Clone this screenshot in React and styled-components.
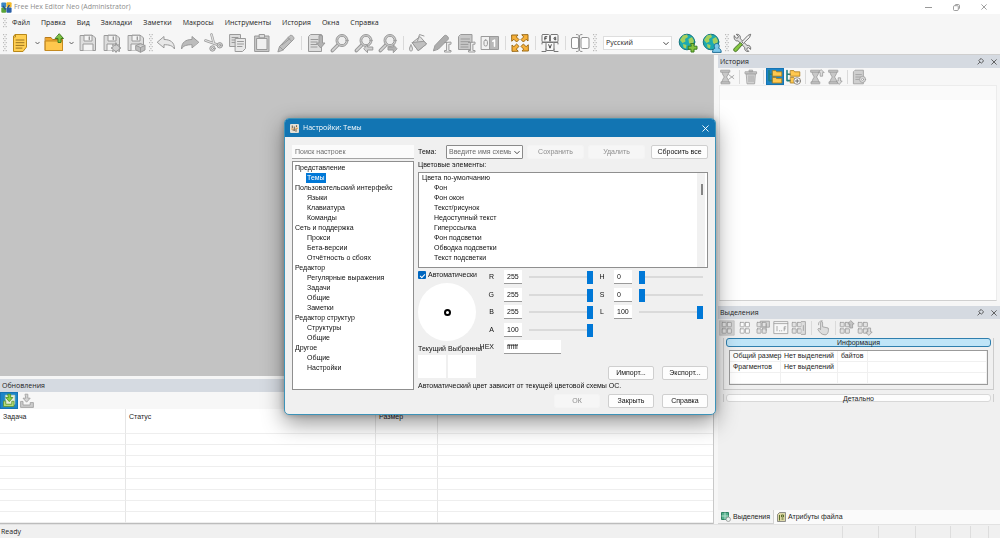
import React, { useState } from "react";
import styled, { createGlobalStyle, css } from "styled-components";

const UI = `"Open Sans", "Noto Sans", sans-serif`;
const DLG = `"Liberation Sans", Arial, sans-serif`;

const Global = createGlobalStyle`
  *, *::before, *::after { box-sizing: border-box; }
  html, body, #root { height: 100%; }
  body { margin: 0; font: 7px/10px ${UI}; color: #1c1c1c; background: #f0f0f0; }
  button, input, select { font: inherit; color: inherit; margin: 0; padding: 0; }
  button { border: 0; background: none; }
  ul { list-style: none; margin: 0; padding: 0; }
  svg { display: block; flex: none; }
`;

/* ---------- shell ---------- */
const Shell = styled.div`
  min-height: 100vh;
  display: flex;
  flex-direction: column;
  background: #f6f6f6;
`;
const TitleBar = styled.header`
  display: flex;
  align-items: center;
  gap: 2px;
  height: 14px;
  padding: 0 2px 0 1px;
  background: #fff;
  color: #8c8c8c;
`;
const TitleText = styled.h1`
  flex: 1;
  margin: 0;
  font-size: 7px;
  font-weight: 400;
`;
const WindowButtons = styled.div`
  display: flex;
`;
const WindowButton = styled.button`
  display: grid;
  place-items: center;
  width: 28px;
  height: 14px;
`;
const MenuBar = styled.nav`
  display: flex;
  align-items: center;
  height: 18px;
`;
const MenuList = styled.ul`
  display: flex;
  gap: 11px;
  padding-left: 2px;
`;
const MenuItem = styled.button`
  display: block;
`;
const ToolBar = styled.div`
  display: flex;
  align-items: center;
  height: 22px;
`;
const ToolGroup = styled.div`
  display: flex;
  gap: 4px;
`;
const ToolButton = styled.button`
  display: grid;
  place-items: center;
  width: ${(p) => (p.$narrow ? 14 : 20)}px;
  height: 20px;
`;
const Sep = styled.span`
  width: ${(p) => (p.$small ? 6 : 10)}px;
  height: 14px;
  display: flex;
  justify-content: center;
  &::after { content: ""; width: 1px; background: #dadada; }
`;
const GripBox = styled.span`
  display: grid;
  place-items: center;
  width: 10px;
`;
const LangSelect = styled.div`
  position: relative;
  margin: 0 6px 0 3px;
  select {
    appearance: none;
    display: block;
    width: 69px;
    height: 14px;
    padding: 0 2px;
    border: 1px solid #dedede;
    background: #fff;
  }
  svg { position: absolute; right: 3px; top: 5px; }
`;
const Main = styled.main`
  flex: 1;
  display: flex;
  gap: 4px;
  border-top: 1px solid #cfcfcf;
`;
const LeftColumn = styled.div`
  flex: 1;
  min-width: 0;
  display: flex;
  flex-direction: column;
  gap: 3px;
  border-right: 1px solid #c8c8c8;
`;
const Workspace = styled.section`
  flex: 1;
  background: #c3c3c3;
`;
const RightColumn = styled.div`
  width: 282px;
  display: flex;
  flex-direction: column;
`;
const Panel = styled.section`
  display: flex;
  flex-direction: column;
  flex: ${(p) => p.$flex || "none"};
  background: ${(p) => p.$bg || "#f7f7f7"};
`;
const PanelHead = styled.header`
  display: flex;
  align-items: center;
  gap: 7px;
  height: 13px;
  padding: 0 3px 0 2px;
  background: #d5dae1;
  h2 { flex: 1; margin: 0; font-size: 7px; font-weight: 400; }
`;
const PanelTools = styled.div`
  display: flex;
  align-items: center;
  height: 17px;
`;
const SmallTool = styled.button`
  display: grid;
  place-items: center;
  width: 18px;
  height: 17px;
  ${(p) => p.$on && css`background: #1d85c8; border: 1px solid #1474b4;`}
`;
const HistoryList = styled.div`
  flex: 1;
  margin: 0 3px 1px 1px;
  border: 1px solid #ececec;
  border-bottom-color: #d0d0d0;
  background: linear-gradient(#fafafa 14px, #fff 14px);
`;
const UpdatesTable = styled.table`
  width: 100%;
  height: 115px;
  border-collapse: separate;
  border-spacing: 0;
  table-layout: fixed;
  background: #fff;
  font: 7px/10px ${DLG};
  border-bottom: 1px solid #bcbcbc;
  th, td { padding: 0 3px; text-align: left; font-weight: 400; border-right: 1px solid #e6e6e6; border-bottom: 1px solid #eeeeee; }
  th { height: 25px; padding-top: 3px; vertical-align: top; }
  th:last-child, td:last-child { border-right: 0; }
`;

/* ---------- selections panel ---------- */
const SelectionBody = styled.div`
  display: flow-root;
  height: 174px;
`;
const PanelSpacer = styled.div`
  height: 4px;
  background: #f6f6f6;
`;
const InfoGroup = styled.div`
  margin: 2px 6px 0 5px;
  padding-bottom: 4px;
  border: 1px solid #cccccc;
  border-top: 0;
`;
const GroupButton = styled.button`
  display: block;
  width: calc(100% - 4px);
  height: ${(p) => (p.$open ? 9 : 8)}px;
  margin: 0 2px ${(p) => (p.$open ? 3 : 0)}px;
  font: 7px/7px ${DLG};
  text-align: center;
  border: 1px solid ${(p) => (p.$open ? "#2f7fae" : "#d8d8d8")};
  border-radius: 3px;
  background: ${(p) => (p.$open ? "#bfe5f8" : "#fdfdfd")};
`;
const DetailRow = styled.div`
  margin: 4px 6px 0 5px;
  border: solid #cfcfcf;
  border-width: 0 1px;
`;
const InfoTable = styled.table`
  width: calc(100% - 10px);
  margin: 0 5px;
  border: 1px solid #9b9b9b;
  border-collapse: separate;
  border-spacing: 0;
  table-layout: fixed;
  background: #fff;
  font: 7px/10px ${DLG};
  th, td {
    height: 11px;
    padding: 0 0 0 3px;
    font-weight: 400;
    text-align: left;
    white-space: nowrap;
    border-right: 1px solid #f0f0f0;
    border-bottom: 1px solid #f0f0f0;
  }
`;
const Tabs = styled.div`
  display: flex;
  height: 14px;
  background: #fafafa;
  font: 7px/10px ${DLG};
`;
const Tab = styled.button`
  display: flex;
  align-items: center;
  gap: 2px;
  padding: 0 3px;
  border: solid ${(p) => (p.$on ? "#d2d2d2" : "transparent")};
  border-width: 0 1px 1px 0;
  background: ${(p) => (p.$on ? "#f4f4f4" : "transparent")};
`;
const StatusBar = styled.footer`
  display: flex;
  align-items: center;
  height: 14px;
  padding-left: 1px;
  background: #f0f0f0;
  border-top: 1px solid #e2e2e2;
  p { flex: 1; margin: 0; }
`;
const StatusCell = styled.span`
  width: ${(p) => p.$w}px;
  height: 12px;
  border-left: 1px solid #dddddd;
`;

/* ---------- dialog ---------- */
const Overlay = styled.div`
  position: fixed;
  inset: 0;
  display: flex;
  align-items: center;
  justify-content: center;
  padding-bottom: 5px;
`;
const Dialog = styled.section`
  width: 432px;
  border: 1px solid #3d93b8;
  border-radius: 5px;
  background: #f0f0f0;
  overflow: hidden;
  box-shadow: 0 8px 22px rgba(0, 0, 0, 0.42), 0 0 6px rgba(0, 0, 0, 0.25);
  font: 7px/10px ${DLG};
  color: #111;
`;
const DialogHead = styled.header`
  display: flex;
  align-items: center;
  gap: 4px;
  height: 18px;
  padding: 0 6px 0 5px;
  background: #1275b3;
  color: #fff;
  h2 { flex: 1; margin: 0; font: 7px/10px ${UI}; }
`;
const DialogBody = styled.div`
  display: flex;
  gap: 4px;
  padding: 8px 7px 0;
`;
const NavColumn = styled.div`
  width: 122px;
  display: flex;
  flex-direction: column;
  gap: 2px;
`;
const SearchInput = styled.input`
  width: 100%;
  height: 14px;
  padding: 0 3px;
  border: 0;
  border-bottom: 1px solid #a5a5a5;
  background: #fbfbfb;
  &::placeholder { color: #6e6e6e; opacity: 1; }
`;
const Tree = styled.ul`
  height: 229px;
  padding: 1px;
  border: 1px solid #8f8f8f;
  background: #fff;
  ul { padding-left: 12px; }
`;
const TreeItem = styled.button`
  display: block;
  height: 10px;
  padding: 0 1px;
  white-space: nowrap;
  ${(p) => p.$on && css`background: #0078d7; color: #fff;`}
`;
const OptionsColumn = styled.div`
  flex: 1;
  min-width: 0;
`;
const ThemeRow = styled.div`
  display: flex;
  align-items: center;
  gap: 4px;
  height: 14px;
  label { width: 24px; }
  button:last-child { margin-left: auto; }
`;
const ThemeSelect = styled.div`
  position: relative;
  select {
    appearance: none;
    display: block;
    width: 77px;
    height: 14px;
    padding: 0 11px 0 2px;
    border: 1px solid #8a8a8a;
    border-radius: 1px;
    background: #fbfbfb;
    color: #6a6a6a;
  }
  svg { position: absolute; right: 3px; top: 5px; }
`;
const PushButton = styled.button`
  width: ${(p) => (p.$wide ? 57 : 46)}px;
  height: 14px;
  border: 1px solid ${(p) => (p.disabled ? "#f4f4f4" : "#cfcfcf")};
  border-radius: 2px;
  background: ${(p) => (p.disabled ? "#f6f6f6" : "#fdfdfd")};
  color: ${(p) => (p.disabled ? "#8e8e8e" : "#111")};
`;
const ElementsTitle = styled.h3`
  margin: 1px 0 2px;
  font: inherit;
`;
const ElementsList = styled.div`
  display: flex;
  height: 96px;
  padding: 0 2px;
  border: 1px solid #8f8f8f;
  background: #fff;
  > ul { flex: 1; }
  ul ul { padding-left: 12px; }
`;
const ScrollTrack = styled.div`
  width: 8px;
  padding: 11px 2px 0 4px;
  background: #f1f1f1;
  &::after { content: ""; display: block; height: 11px; background: #858585; }
`;
const ColorArea = styled.div`
  display: flex;
  margin-top: 2px;
  height: 112px;
`;
const WheelColumn = styled.div`
  width: 64px;
  display: flex;
  flex-direction: column;
`;
const CheckLabel = styled.label`
  display: flex;
  align-items: center;
  gap: 2px;
  height: 10px;
  margin-bottom: 3px;
  input {
    appearance: none;
    display: grid;
    place-items: center;
    width: 8px;
    height: 8px;
    border-radius: 1px;
    background: #0067c0;
  }
  input::before {
    content: "";
    width: 5px;
    height: 3px;
    border: solid #fff;
    border-width: 0 0 1px 1px;
    transform: rotate(-45deg);
  }
`;
const Wheel = styled.div`
  display: grid;
  place-items: center;
  width: 58px;
  height: 58px;
  border-radius: 50%;
  background: #fff;
  &::after {
    content: "";
    width: 7px;
    height: 7px;
    border: 2px solid #000;
    border-radius: 50%;
  }
`;
const Captions = styled.div`
  display: flex;
  gap: 2px;
  margin: 3px 0 1px;
  overflow: hidden;
  white-space: nowrap;
`;
const Swatches = styled.div`
  display: flex;
  gap: 2px;
  span { width: 28px; height: 23px; background: #fff; }
`;
const Channels = styled.div`
  width: ${(p) => p.$w}px;
  height: ${(p) => p.$h}px;
  display: flex;
  flex-direction: column;
  justify-content: space-between;
`;
const Channel = styled.div`
  display: flex;
  align-items: center;
  height: 14px;
  label {
    width: ${(p) => p.$label}px;
    padding-right: ${(p) => (p.$center ? 4 : 10)}px;
    text-align: ${(p) => (p.$center ? "center" : "right")};
    display: flex;
    justify-content: ${(p) => (p.$center ? "center" : "flex-end")};
  }
`;
const ValueInput = styled.input`
  width: ${(p) => (p.$long ? 57 : 18)}px;
  height: 14px;
  padding: 0 3px;
  border: 0;
  border-bottom: 1px solid #9a9a9a;
  background: #fff;
`;
const Slider = styled.input`
  appearance: none;
  width: 64px;
  height: 14px;
  margin-left: 7px;
  background: transparent;
  &::-webkit-slider-runnable-track { height: 2px; background: #dadada; }
  &::-webkit-slider-thumb { appearance: none; width: 6px; height: 13px; margin-top: -5px; background: #0078d7; }
`;
const ButtonRow = styled.div`
  display: flex;
  justify-content: flex-end;
  gap: 8px;
`;
const ImportRow = styled(ButtonRow)`
  margin-top: -16px;
`;
const Note = styled.p`
  margin: 1px 0 0;
`;
const DialogFoot = styled.footer`
  padding: 3px 7px 6px;
`;

/* ---------- icons ---------- */
const K = "#9a9a9a";
const F = "#dddddd";
const Svg = ({ s = 20, children }) => (
  <svg width={s} height={s} viewBox="0 0 20 20" fill={F} stroke={K} strokeWidth="1" strokeLinejoin="round" strokeLinecap="round" aria-hidden="true">
    {children}
  </svg>
);
const Chevron = ({ s = 5, c = "#444" }) => (
  <svg width={s} height={s - 1} viewBox="0 0 6 4" fill="none" stroke={c} strokeWidth="1" aria-hidden="true"><path d="M0.5 0.7 3 3.2 5.5 0.7" /></svg>
);
const GripDots = ({ rows }) => (
  <GripBox>
    <svg width="4" height={rows * 4 - 2} viewBox={`0 0 4 ${rows * 4 - 2}`} fill="#b9b9b9" aria-hidden="true">
      {Array.from({ length: rows }, (_, i) => (
        <g key={i}><rect x="0" y={i * 4} width="1.2" height="1.2" /><rect x="2.6" y={i * 4} width="1.2" height="1.2" /><rect x="1.3" y={i * 4 + 2} width="1.2" height="1.2" /></g>
      ))}
    </svg>
  </GripBox>
);
const Grip = () => <GripDots rows={5} />;
const MenuGrip = () => <GripDots rows={3} />;
const AppLogo = () => (
  <svg width="11" height="11" viewBox="0 0 11 11" aria-hidden="true">
    <rect x="0.3" y="0.5" width="4.9" height="4.9" rx="1" fill="#3a86c4" />
    <rect x="5.4" y="0.2" width="5.2" height="5.3" rx="1" fill="#f2b928" />
    <rect x="0.3" y="5.5" width="4.9" height="5.2" rx="1" fill="#5aa43a" />
    <rect x="5.4" y="5.6" width="5.2" height="5.1" rx="1" fill="#2a5fa8" />
    <path d="M2 4 4.6 7.6M8.4 3 6.6 6" stroke="#24508c" strokeWidth="1.4" />
  </svg>
);
const NewIcon = () => (
  <Svg><path d="M5.5 1.5H16.5V14L13 18.5H3.5V4Z" fill="#ffcf52" stroke="#b98818" /><path d="M5.5 1.5V4H3.5Z" fill="#fff0b8" stroke="#b98818" /><path d="M6 7H14M6 9.7H14M6 12.4H14M6 15.1H12" stroke="#9b7420" /></Svg>
);
const OpenIcon = () => (
  <Svg><path d="M1.5 4.5H7L8.5 6.5H18.5V17.5H1.5Z" fill="#f0a62e" stroke="#b87a18" /><path d="M1.5 8H18.5V17.5H1.5Z" fill="#ffc74d" stroke="#c48a20" /><path d="M15.5 1 19.5 5.5H17V9.5H14V5.5H11.5Z" fill="#7fc241" stroke="#3f7d1d" /></Svg>
);
const Floppy = () => (
  <><path d="M2.5 2.5H15L17.5 5V17.5H2.5Z" /><path d="M6 2.5V8H14V2.5Z" fill="#f4f4f4" /><path d="M11.3 4V6.5" strokeWidth="1.4" /><path d="M5 17.5V11H15V17.5" fill="#f4f4f4" /></>
);
const SaveIcon = () => <Svg><Floppy /></Svg>;
const SaveAsIcon = () => <Svg><Floppy /><path d="M14 10 15 12.5 17.5 11.5 16.8 14 19 15 16.8 16 17.5 18.5 15 17.5 14 19.5 13 17.5 10.5 18.5 11.2 16 9 15 11.2 14 10.5 11.5 13 12.5Z" fill="#d0d0d0" /></Svg>;
const SaveAllIcon = () => <Svg><Floppy /><path d="M10 12.5 14.5 10.5 19 12.5V17L14.5 19.3 10 17Z" fill="#bdbdbd" /><path d="M10 12.5 14.5 14.5 19 12.5M14.5 14.5V19" /></Svg>;
const UndoIcon = () => <Svg><path d="M1.5 9 8 3.5V6.5C14 6.5 18.5 9 18.5 16C16.5 12.5 13 11.7 8 11.7V14.5Z" fill="#e8e8e8" /></Svg>;
const RedoIcon = () => <Svg><path d="M18.5 9 12 3.5V6.5C6 6.5 1.5 9 1.5 16C3.5 12.5 7 11.7 12 11.7V14.5Z" fill="#bcbcbc" /></Svg>;
const CutIcon = () => <Svg><path d="M7.5 1.5 10 11M1.5 7.5 13 11.5" strokeWidth="2.6" /><path d="M7.5 1.5 10 11M1.5 7.5 13 11.5" stroke="#e2e2e2" strokeWidth="1.2" /><circle cx="8.5" cy="15.5" r="2.7" /><circle cx="15.8" cy="12.3" r="2.7" /><circle cx="8.5" cy="15.5" r="1" fill="#f7f7f7" /><circle cx="15.8" cy="12.3" r="1" fill="#f7f7f7" /></Svg>;
const CopyIcon = () => <Svg><path d="M2 1.5H12.5V13.5H2Z" /><path d="M4 4.5H10M4 7H7M4 9.5H7" /><path d="M7.5 5.5H17.5V15.5L14.5 18.5H7.5Z" fill="#e8e8e8" /><path d="M9.5 8.5H15.5M9.5 11H15.5M9.5 13.5H14" /></Svg>;
const PasteIcon = () => <Svg><path d="M3 3H17V18.5H3Z" fill="#c9c9c9" /><path d="M5 5.5H15V16.5H5Z" fill="#f0f0f0" /><path d="M7.5 1.5H12.5V4.8H7.5Z" /></Svg>;
const PencilIcon = () => <Svg><path d="M2 18.5 3.5 13.5 14 2.5C16 1.5 18.8 4.5 17.7 6.3L7 17Z" fill="#c0c0c0" /><path d="M12 4.7 15.6 8.3M3.5 13.5 7 17M6 12 14 5.5" /></Svg>;
const DocArrowIcon = () => <Svg><path d="M5 1.5H15.5V18.5H2.5V4Z" /><path d="M5 6.5H12M5 9H11M5 11.5H11M5 14H11" /><path d="M13 3V10H10.5L14.7 15 19 10H16.5V3Z" fill="#b2b2b2" /></Svg>;
const Lens = () => <><path d="M2.4 17.6 8.3 11.5" strokeWidth="3.6" /><path d="M2.6 17.4 8 12" stroke="#d4d4d4" strokeWidth="1.6" /><circle cx="12" cy="7.5" r="6" fill="#cdcdcd" /><circle cx="12" cy="7.5" r="4.2" fill="#efefef" /></>;
const SearchIcon = () => <Svg><Lens /></Svg>;
const SearchNextIcon = () => <Svg><Lens /><path d="M10 15.5 13.5 11.7V14H18.8V17H13.5V19.3Z" fill="#d0d0d0" /></Svg>;
const SearchPrevIcon = () => <Svg><Lens /><path d="M18.8 15.5 15.3 11.7V14H10V17H15.3V19.3Z" fill="#b2b2b2" /></Svg>;
const FillIcon = () => <Svg><path d="M4.5 9.5 12 3.5 18.5 11 10.5 17.5Z" /><path d="M4.5 9.5 16 8.3 18.5 11 10.5 17.5Z" fill="#c0c0c0" /><path d="M9.5 8 11.5 1.5 16 3" fill="none" /><path d="M3 12C1 15 1 17.5 3 18.3C5 17.5 5 15 3 12Z" /></Svg>;
const IBeam = () => <path d="M12.5 9.5H14.6V17.5H12.5V19H19V17.5H16.9V11.2H19V9.5Z" fill="#f2f2f2" />;
const PencilTextIcon = () => <Svg><path d="M1.5 17.5 3 12.5 12.5 2.5C14.5 1.5 17.3 4.5 16.2 6.3L6.5 16Z" fill="#adadad" /><IBeam /></Svg>;
const DocTextIcon = () => <Svg><path d="M5 1.5H16V16.5H2.5V4Z" fill="#c8c8c8" /><path d="M5 6H13.5M5 8.7H13.5M5 11.4H12M5 14H12" /><IBeam /></Svg>;
const BitsIcon = () => <Svg><path d="M1.5 3.5H10V16.5H1.5Z" fill="#f2f2f2" /><path d="M10 3.5H18.5V16.5H10Z" fill="#b8b8b8" /><rect x="4" y="7" width="3.4" height="6" rx="1.6" fill="none" /><path d="M12.8 8.2 14.5 7V13.2" fill="none" stroke="#fff" strokeWidth="1.5" /></Svg>;
const ExpandIcon = () => (
  <Svg>{[0, 90, 180, 270].map((r) => (
    <path key={r} transform={`rotate(${r} 10 10)`} d="M2 2H8L6.3 3.9 9 6.6 6.6 9 3.9 6.3 2 8Z" fill="#f7b13a" stroke="#9b6a15" />
  ))}</Svg>
);
const KeysIcon = () => (
  <Svg><g fill="#fafafa" stroke="#777"><rect x="2" y="1.5" width="7.5" height="7.5" rx="1" /><rect x="10.5" y="1.5" width="7.5" height="7.5" rx="1" /><rect x="6" y="9.5" width="8" height="8" rx="1" /><path d="M2 11V9.5H6M18 11V9.5H14M2 18.5H6V16M18 18.5H14V16" fill="none" /></g>
    <path d="M4.9 7V3.7H6.9M4.9 5.3H6.4M15.8 4.3C13.5 3 13.2 7.5 15.8 6.8V5.6H15M8.7 11.7 10 15.2 11.3 11.7" fill="none" stroke="#333" strokeWidth="0.9" /></Svg>
);
const SplitIcon = () => <Svg><g fill="#fdfdfd" stroke="#8f8f8f"><rect x="1.5" y="4.5" width="7" height="11" rx="1.5" /><rect x="11" y="4.5" width="8" height="11" rx="1.5" /><path d="M6.5 1.5C8.5 1.5 9 2.2 9 3V17C9 18 8.5 18.5 6.5 18.5M12 1.5C10 1.5 9.5 2.2 9.5 3V17C9.5 18 10 18.5 12 18.5" fill="none" /></g></Svg>;
const Globe = () => <><circle cx="9" cy="9" r="7.8" fill="#1eaab0" stroke="#16767f" /><path d="M5 2.5 9 1.5 10 4 7 6 7.5 8.5 4.5 10 2 7ZM10.5 6 14 4 16 8 14 12 11 10ZM5 11 8.5 12 8 15.5 5.5 14.5Z" fill="#a6d05c" stroke="none" /></>;
const GlobeAddIcon = () => <Svg><Globe /><path d="M13 10.5H16V13.2H19V16.2H16V19H13V16.2H10.2V13.2H13Z" fill="#86c440" stroke="#3b7d1e" /></Svg>;
const GlobeUserIcon = () => <Svg><Globe /><path d="M10.5 19C10.5 16.5 12 15.5 13 15.2C11.5 13 12.3 10.5 14.7 10.5S18 13 16.5 15.2C18 15.6 19.2 16.5 19.2 19Z" fill="#7cc8ea" stroke="#1b6c94" /></Svg>;
const ToolsIcon = () => (
  <Svg>
    <path d="M2.2 3 4.6 5.2 6 4.8 6.4 3.3 4.2 1.4C7 0.8 9 3 8.2 5.6L15 12.4C17.6 11.8 19.2 13.8 18.6 16.4L16.6 14.6 15.2 15 14.8 16.4 16.8 18.4C14 19 12.2 17 12.8 14.5L6 7.8C3.4 8.6 1.5 5.8 2.2 3Z" fill="#e0e0e0" stroke="#666" strokeWidth="0.9" />
    <path d="M18.6 1.6 17.6 4.4 11.4 10.4 9.8 8.8 15.8 2.6Z" fill="#f0f0f0" stroke="#666" strokeWidth="0.9" />
    <path d="M8.6 9.8 10.4 11.6 4.6 18.2C3 19.6 0.6 17.2 2 15.6Z" fill="#84c63e" stroke="#44702a" />
  </Svg>
);
const HourglassShape = () => <><path d="M2.5 1.5H13.5V4H12C12 7 10 8.5 9.5 10C10 11.5 12 13 12 16H13.5V18.5H2.5V16H4C4 13 6 11.5 6.5 10C6 8.5 4 7 4 4H2.5Z" fill="#c8c8c8" /><path d="M4 4H12M4 16H12" /></>;
const HourCut = () => <Svg s={16}><HourglassShape /><path d="M12 7 18.5 12M12 13 18.5 8" /></Svg>;
const HourUp = () => <Svg s={16}><HourglassShape /><path d="M15.5 1 19 4.5H17V9H14V4.5H12Z" fill="#ddd" /></Svg>;
const HourDown = () => <Svg s={16}><HourglassShape /><path d="M15.5 19 19 15H17V11H14V15H12Z" /></Svg>;
const TrashIcon = () => <Svg s={16}><path d="M4.5 6H15.5L14.5 18.5H5.5Z" fill="#d6d6d6" /><path d="M3 3.5H17V6H3ZM8 1.5H12V3.5H8Z" fill="#cfcfcf" /><path d="M7.5 8.5V16M10 8.5V16M12.5 8.5V16" /></Svg>;
const TreeFoldersIcon = ({ add }) => (
  <Svg s={16}><path d="M2.5 2V14.5H7M2.5 6.5H7" fill="none" stroke="#1f7d80" strokeWidth="2" /><path d="M7 2H11L12 3.5H18.5V9H7Z" fill="#ffc850" stroke="#a87818" /><path d="M7 10.5H11L12 12H18.5V17.5H7Z" fill="#ffc850" stroke="#a87818" />{add && <><circle cx="15.2" cy="15" r="4.2" fill="#fff" stroke="#777" /><path d="M13 15H17.4M15.2 12.8V17.2" stroke="#444" /></>}</Svg>
);
const DocGearIcon = () => <Svg s={16}><path d="M5.5 1.5H15.5V18.5H3V4Z" fill="#cfcfcf" /><path d="M6 7H13M6 10H12M6 13H10" /><circle cx="14.5" cy="13" r="3.8" /><circle cx="14.5" cy="13" r="1.3" fill="#fff" /></Svg>;
const Grid = ({ o = 0, pale }) => <>{[[1.5, 3], [8, 3], [1.5, 11], [8, 11]].map(([x, y], i) => <rect key={i} x={x + o} y={y} width="5" height="5.5" rx="0.5" fill={pale ? "#fafafa" : "#e2e2e2"} />)}</>;
const SelA = () => <Svg s={16}><path d="M1 1H19V19H1Z" fill="#d2d2d2" stroke="#c0c0c0" /><Grid o={2.5} /></Svg>;
const SelB = () => <Svg s={16}><Grid o={2.5} pale /></Svg>;
const SelC = () => <Svg s={16}><path d="M7 1.5H18V9H7Z" fill="#d2d2d2" /><Grid o={1} /><path d="M14 5V13" /></Svg>;
const SelD = () => <Svg s={16}><path d="M1.5 2H18.5V17H1.5Z" fill="#f7f7f7" /><path d="M1.5 4.5H18.5" /><path d="M5 8V13.5M8 13.5H8.5M10.5 13.5H11M14 13.5V8.5H16M14 11H15.5" /></Svg>;
const SelE = () => <Svg s={16}><Grid /><path d="M13 2H18V18H13" fill="#ddd" /><path d="M15.5 7V13" /></Svg>;
const HandIcon = () => <Svg s={16}><path d="M7 11V3.5C7 1.5 9.5 1.5 9.5 3.5V8.5L16.5 10C17.5 14 16 18.5 12.5 18.5C8.5 18.5 6 16 3.5 11.5C4.5 10 5.5 10 7 12" /><path d="M4.5 6C4 2 7 0.8 9 1" fill="none" /></Svg>;
const SelUp = () => <Svg s={16}><Grid /><path d="M15 1 19 5H17V10H13.5V5H11.5Z" fill="#c4c4c4" /></Svg>;
const SelDown = () => <Svg s={16}><Grid /><path d="M15 19 19 15H17V10H13.5V15H11.5Z" /></Svg>;
const DownloadOn = () => <Svg s={15}><path d="M5 3H17V15H5Z" fill="#e6efdc" stroke="#cddcc0" /><path d="M8 1.5H11.5V6H14.5L9.7 11.5 5 6H8Z" fill="#8ccf3f" stroke="#4b8a1c" /><path d="M2 11V18H16V11H13V15H5V11Z" fill="#b6dc7a" stroke="#5c8f2a" /></Svg>;
const DownloadOff = () => <Svg s={16}><path d="M8 1.5H11V6.5H14L9.5 11.5 5 6.5H8Z" fill="#d4d4d4" /><path d="M2 11V18H18V12H14V15H5V11Z" fill="#cccccc" /></Svg>;
const PinIcon = () => <svg width="7" height="7" viewBox="0 0 7 7" fill="none" stroke="#444" strokeWidth="0.8" aria-hidden="true"><path d="M3 1.2 4.3 0.6 6.4 2.7 5.8 4 4.3 5.2 1.8 2.7ZM2.9 4.1 0.6 6.4" /></svg>;
const CloseX = ({ s = 6, c = "#444" }) => <svg width={s} height={s} viewBox="0 0 6 6" stroke={c} strokeWidth="0.8" aria-hidden="true"><path d="M0.4 0.4 5.6 5.6M5.6 0.4 0.4 5.6" /></svg>;
const TabSelIcon = () => <svg width="10" height="10" viewBox="0 0 10 10" aria-hidden="true"><path d="M0.5 0.5H7.5V7.5H0.5Z" fill="#55b08c" stroke="#2f8262" /><path d="M4 0.5V7.5M0.5 4H7.5" stroke="#b7e0cd" /><circle cx="7.3" cy="7.3" r="2.2" fill="#e9f2ee" stroke="#888" strokeWidth="0.7" /></svg>;
const TabAttrIcon = () => <svg width="9" height="10" viewBox="0 0 9 10" aria-hidden="true"><path d="M2.5 0.5H8.5V9.5H0.5V2.5Z" fill="#ded9a8" stroke="#777" strokeWidth="0.8" /><path d="M2.5 3V8.5M4.5 3H6.5V5H4.5ZM4.5 7H6.5" stroke="#5a6d2a" strokeWidth="1" fill="none" /></svg>;
const DialogIcon = () => <svg width="9" height="9" viewBox="0 0 9 9" aria-hidden="true"><rect width="9" height="9" rx="1" fill="#e6e1d6" /><path d="M2.3 1.5V4M6.5 1.3V3M2.5 6H4M6 5V7.7M4.3 2.5V7" stroke="#7a6750" strokeWidth="1.1" /><path d="M5.5 4.2H7.8M1.2 5H3.2" stroke="#d98a2b" strokeWidth="1.1" /></svg>;

/* ---------- data ---------- */
const menu = ["Файл", "Правка", "Вид", "Закладки", "Заметки", "Макросы", "Инструменты", "История", "Окна", "Справка"];
const toolGroups = {
  save: [["Сохранить", SaveIcon], ["Сохранить как", SaveAsIcon], ["Сохранить все", SaveAllIcon]],
  edit: [["Отменить", UndoIcon], ["Повторить", RedoIcon], ["Вырезать", CutIcon], ["Копировать", CopyIcon], ["Вставить", PasteIcon], ["Правка", PencilIcon]],
  find: [["Перейти", DocArrowIcon], ["Найти", SearchIcon], ["Найти далее", SearchNextIcon], ["Найти ранее", SearchPrevIcon]],
  fill: [["Заполнить", FillIcon], ["Изменить", PencilTextIcon], ["Вставить файл", DocTextIcon], ["Биты", BitsIcon]],
};
const tree = [
  ["Представление", ["Темы"]],
  ["Пользовательский интерфейс", ["Языки", "Клавиатура", "Команды"]],
  ["Сеть и поддержка", ["Прокси", "Бета-версии", "Отчётность о сбоях"]],
  ["Редактор", ["Регулярные выражения", "Задачи", "Общие", "Заметки"]],
  ["Редактор структур", ["Структуры", "Общие"]],
  ["Другое", ["Общие", "Настройки"]],
];
const elements = ["Фон", "Фон окон", "Текст/рисунок", "Недоступный текст", "Гиперссылка", "Фон подсветки", "Обводка подсветки", "Текст подсветки"];
const rgba = [["R", 255, 255], ["G", 255, 255], ["B", 255, 255], ["A", 100, 100]];
const hsl = [["H", 0, 360], ["S", 0, 100], ["L", 100, 100]];

const Tools = ({ items }) => (
  <ToolGroup>
    {items.map(([name, Icon]) => <ToolButton key={name} aria-label={name}><Icon /></ToolButton>)}
  </ToolGroup>
);
const SmallTools = ({ items }) => (
  <PanelTools>
    {items.map((it, i) => (it ? <SmallTool key={i} aria-label={it[0]} $on={it[2]}>{it[1]}</SmallTool> : <Sep key={i} $small />))}
  </PanelTools>
);
const Head = ({ title, plain }) => (
  <PanelHead>
    <h2>{title}</h2>
    {!plain && <><button aria-label="Закрепить"><PinIcon /></button><button aria-label="Закрыть"><CloseX /></button></>}
  </PanelHead>
);
const ChannelRow = ({ name, value, max, label, center }) => {
  const [v, setV] = useState(value);
  return (
    <Channel $label={label} $center={center}>
      <label htmlFor={`ch-${name}`}>{name}</label>
      <ValueInput id={`ch-${name}`} value={v} onChange={(e) => setV(e.target.value)} />
      <Slider type="range" min="0" max={max} value={v} aria-label={name} onChange={(e) => setV(e.target.value)} />
    </Channel>
  );
};

function SettingsDialog() {
  const [current, setCurrent] = useState("Темы");
  const [auto, setAuto] = useState(true);
  return (
    <Overlay>
      <Dialog role="dialog" aria-labelledby="dlg-title">
        <DialogHead>
          <DialogIcon />
          <h2 id="dlg-title">Настройки: Темы</h2>
          <button aria-label="Закрыть"><CloseX s={7} c="#fff" /></button>
        </DialogHead>
        <DialogBody>
          <NavColumn>
            <SearchInput type="text" placeholder="Поиск настроек" aria-label="Поиск настроек" />
            <Tree>
              {tree.map(([group, items]) => (
                <li key={group}>
                  <TreeItem>{group}</TreeItem>
                  <ul>
                    {items.map((n) => (
                      <li key={n}><TreeItem $on={n === current} onClick={() => setCurrent(n)}>{n}</TreeItem></li>
                    ))}
                  </ul>
                </li>
              ))}
            </Tree>
          </NavColumn>
          <OptionsColumn>
            <ThemeRow>
              <label htmlFor="theme">Тема:</label>
              <ThemeSelect>
                <select id="theme"><option>Введите имя схемы</option></select>
                <Chevron s={6} />
              </ThemeSelect>
              <PushButton $wide disabled>Сохранить</PushButton>
              <PushButton $wide disabled>Удалить</PushButton>
              <PushButton $wide>Сбросить все</PushButton>
            </ThemeRow>
            <ElementsTitle>Цветовые элементы:</ElementsTitle>
            <ElementsList>
              <ul>
                <li>
                  <TreeItem>Цвета по-умолчанию</TreeItem>
                  <ul>{elements.map((n) => <li key={n}><TreeItem>{n}</TreeItem></li>)}</ul>
                </li>
              </ul>
              <ScrollTrack />
            </ElementsList>
            <ColorArea>
              <WheelColumn>
                <CheckLabel><input type="checkbox" checked={auto} onChange={() => setAuto(!auto)} />Автоматически</CheckLabel>
                <Wheel />
                <Captions><span>Текущий</span><span>Выбранный:</span></Captions>
                <Swatches><span /><span /></Swatches>
              </WheelColumn>
              <Channels $w={112} $h={84}>
                {rgba.map(([n, v, m]) => <ChannelRow key={n} name={n} value={v} max={m} label={22} />)}
                <Channel $label={22}>
                  <label htmlFor="hex">HEX</label>
                  <ValueInput id="hex" $long defaultValue="ffffff" />
                </Channel>
              </Channels>
              <Channels $w={112} $h={49}>
                {hsl.map(([n, v, m]) => <ChannelRow key={n} name={n} value={v} max={m} label={20} center />)}
              </Channels>
            </ColorArea>
            <ImportRow>
              <PushButton>Импорт...</PushButton>
              <PushButton>Экспорт...</PushButton>
            </ImportRow>
            <Note>Автоматический цвет зависит от текущей цветовой схемы ОС.</Note>
          </OptionsColumn>
        </DialogBody>
        <DialogFoot>
          <ButtonRow>
            <PushButton disabled>ОК</PushButton>
            <PushButton>Закрыть</PushButton>
            <PushButton>Справка</PushButton>
          </ButtonRow>
        </DialogFoot>
      </Dialog>
    </Overlay>
  );
}

export default function App() {
  return (
    <>
      <Global />
      <Shell>
        <TitleBar>
          <AppLogo />
          <TitleText>Free Hex Editor Neo (Administrator)</TitleText>
          <WindowButtons>
            <WindowButton aria-label="Свернуть"><svg width="7" height="1" aria-hidden="true"><rect width="7" height="1" fill="#999" /></svg></WindowButton>
            <WindowButton aria-label="Восстановить"><svg width="7" height="7" viewBox="0 0 7 7" fill="none" stroke="#888" strokeWidth="0.8" aria-hidden="true"><rect x="0.5" y="1.7" width="4.8" height="4.8" rx="1" /><path d="M2 1.5C2 0.8 2.5 0.5 3 0.5H5.3C6 0.5 6.5 1 6.5 1.7V4C6.5 4.6 6 5 5.5 5" /></svg></WindowButton>
            <WindowButton aria-label="Закрыть"><CloseX c="#888" /></WindowButton>
          </WindowButtons>
        </TitleBar>
        <MenuBar>
          <MenuGrip />
          <MenuList>{menu.map((m) => <li key={m}><MenuItem>{m}</MenuItem></li>)}</MenuList>
        </MenuBar>
        <ToolBar>
          <Grip />
          <ToolButton aria-label="Создать"><NewIcon /></ToolButton>
          <ToolButton $narrow aria-label="Варианты создания"><Chevron s={5} /></ToolButton>
          <ToolButton aria-label="Открыть"><OpenIcon /></ToolButton>
          <ToolButton $narrow aria-label="Варианты открытия"><Chevron s={5} /></ToolButton>
          <Tools items={toolGroups.save} />
          <Grip />
          <Tools items={toolGroups.edit} />
          <Sep />
          <Tools items={toolGroups.find} />
          <Sep />
          <Tools items={toolGroups.fill} />
          <Sep />
          <Tools items={[["Развернуть", ExpandIcon]]} />
          <Sep />
          <Tools items={[["Клавиши", KeysIcon]]} />
          <Sep />
          <Tools items={[["Разделить", SplitIcon]]} />
          <Grip />
          <LangSelect>
            <select aria-label="Язык"><option>Русский</option></select>
            <Chevron s={6} />
          </LangSelect>
          <Tools items={[["Добавить язык", GlobeAddIcon], ["Переводчик", GlobeUserIcon]]} />
          <Grip />
          <Tools items={[["Настройки", ToolsIcon]]} />
        </ToolBar>
        <Main>
          <LeftColumn>
            <Workspace />
            <Panel>
              <Head title="Обновления" plain />
              <SmallTools items={[["Загружать", <DownloadOn />, true], ["Установить", <DownloadOff />]]} />
              <UpdatesTable>
                <colgroup><col style={{ width: 126 }} /><col style={{ width: 250 }} /><col style={{ width: 62 }} /><col /></colgroup>
                <thead><tr><th>Задача</th><th>Статус</th><th>Размер</th><th /></tr></thead>
                <tbody>
                  {Array.from({ length: 8 }, (_, i) => <tr key={i}><td /><td /><td /><td /></tr>)}
                </tbody>
              </UpdatesTable>
            </Panel>
          </LeftColumn>
          <RightColumn>
            <Panel $flex="1">
              <Head title="История" />
              <SmallTools items={[
                ["Очистить", <HourCut />], null, ["Удалить", <TrashIcon />], null,
                ["Дерево", <TreeFoldersIcon />, true], ["Добавить ветвь", <TreeFoldersIcon add />], null,
                ["Выше", <HourUp />], ["Ниже", <HourDown />], null, ["Параметры", <DocGearIcon />],
              ]} />
              <HistoryList />
            </Panel>
            <Panel $bg="#f0f0f0">
              <PanelSpacer />
              <Head title="Выделения" />
              <SmallTools items={[
                ["Все", <SelA />], ["Снять", <SelB />], ["Сдвинуть", <SelC />], ["Диапазон", <SelD />], ["Инвертировать", <SelE />], null,
                ["Указать", <HandIcon />], null, ["Загрузить", <SelUp />], ["Выгрузить", <SelDown />],
              ]} />
              <SelectionBody>
                <InfoGroup>
                  <GroupButton $open>Информация</GroupButton>
                  <InfoTable>
                    <colgroup><col style={{ width: 51 }} /><col style={{ width: 57 }} /><col style={{ width: 30 }} /><col /></colgroup>
                    <tbody>
                      <tr><th scope="row">Общий размер</th><td>Нет выделений</td><td>байтов</td><td /></tr>
                      <tr><th scope="row">Фрагментов</th><td>Нет выделений</td><td /><td /></tr>
                      <tr><td /><td /><td /><td /></tr>
                    </tbody>
                  </InfoTable>
                </InfoGroup>
                <DetailRow><GroupButton>Детально</GroupButton></DetailRow>
              </SelectionBody>
              <Tabs role="tablist">
                <Tab role="tab" aria-selected="true" $on><TabSelIcon />Выделения</Tab>
                <Tab role="tab" aria-selected="false"><TabAttrIcon />Атрибуты файла</Tab>
              </Tabs>
            </Panel>
          </RightColumn>
        </Main>
        <StatusBar>
          <p>Ready</p>
          {[36, 37, 35, 20, 18, 12].map((w, i) => <StatusCell key={i} $w={w} />)}
        </StatusBar>
      </Shell>
      <SettingsDialog />
    </>
  );
}
